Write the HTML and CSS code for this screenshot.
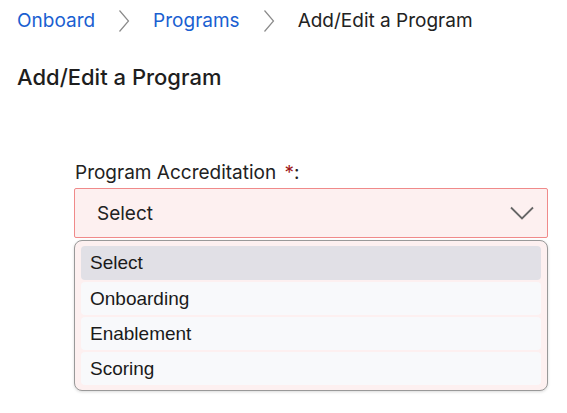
FILE: index.html
```html
<!DOCTYPE html>
<html lang="en">
<head>
    <meta charset="UTF-8">
    <meta name="viewport" content="width=device-width, initial-scale=1.0">
    <title>Add/Edit a Program</title>
    <link rel="stylesheet" href="styles.css">
</head>
<body>
    <nav class="breadcrumb">
        <a href="#">Onboard</a>
        <svg class="crumb-sep" width="12" height="24" viewBox="0 0 12 24"><path d="M1.5 1.5 L10.5 12 L1.5 22.5" fill="none" stroke="#8a8a8a" stroke-width="1.2"/></svg>
        <a href="#">Programs</a>
        <svg class="crumb-sep" width="12" height="24" viewBox="0 0 12 24"><path d="M1.5 1.5 L10.5 12 L1.5 22.5" fill="none" stroke="#8a8a8a" stroke-width="1.2"/></svg>
        <span class="current">Add/Edit a Program</span>
    </nav>

    <h1>Add/Edit a Program</h1>

    <div class="form">
        <label class="field-label">Program Accreditation <span class="req">*</span>:</label>
        <div class="select-box">
            <span>Select</span>
            <svg width="24" height="14" viewBox="0 0 24 14"><path d="M1 1.5 L12 12.5 L23 1.5" fill="none" stroke="#666" stroke-width="1.8"/></svg>
        </div>
        <ul class="options">
            <li class="active">Select</li>
            <li>Onboarding</li>
            <li>Enablement</li>
            <li>Scoring</li>
        </ul>
    </div>
</body>
</html>
```

FILE: styles.css
```css
* {
    box-sizing: border-box;
    margin: 0;
    padding: 0;
}

body {
    font-family: 'Inter', 'Liberation Sans', sans-serif;
    color: #222;
    padding: 10px 17px;
    background: #fff;
}

.breadcrumb {
    display: flex;
    align-items: center;
    font-size: 19px;
    line-height: 22px;
    height: 22px;
}

.breadcrumb a {
    color: #1a5fd1;
    text-decoration: none;
}

.crumb-sep {
    margin: 0 23px 0 23px;
}

.current {
    color: #222;
}

h1 {
    margin-top: 32px;
    font-size: 22px;
    line-height: 27px;
    font-weight: 500;
    color: #1e1e1e;
}

.form {
    margin: 71px 2px 0 57px;
}

.field-label {
    display: block;
    font-size: 19px;
    line-height: 22px;
    color: #222;
    padding-left: 1px;
    margin-bottom: 4px;
}

.req {
    color: #a01818;
    margin-left: 3px;
}

.select-box {
    display: flex;
    align-items: center;
    justify-content: space-between;
    height: 50px;
    padding: 0 13px 0 22px;
    border: 1px solid #f08a8a;
    border-radius: 2px;
    background: #fdf0f0;
    font-size: 19px;
}

.options {
    list-style: none;
    margin-top: 2px;
    padding: 5px 6px 5px;
    border: 1px solid #999;
    border-radius: 8px;
    background: #fdf0f0;
    box-shadow: 0 1px 3px rgba(0, 0, 0, 0.15);
    display: flex;
    flex-direction: column;
    gap: 2px;
    font-family: 'Liberation Sans', Arial, sans-serif;
    font-size: 19px;
}

.options li {
    height: 33px;
    line-height: 33px;
    padding-left: 9px;
    border-radius: 4px;
    background: #f8f9fb;
    color: #1a1a1a;
}

.options li.active {
    background: #e1e0e6;
    height: 34px;
    line-height: 34px;
}
```
